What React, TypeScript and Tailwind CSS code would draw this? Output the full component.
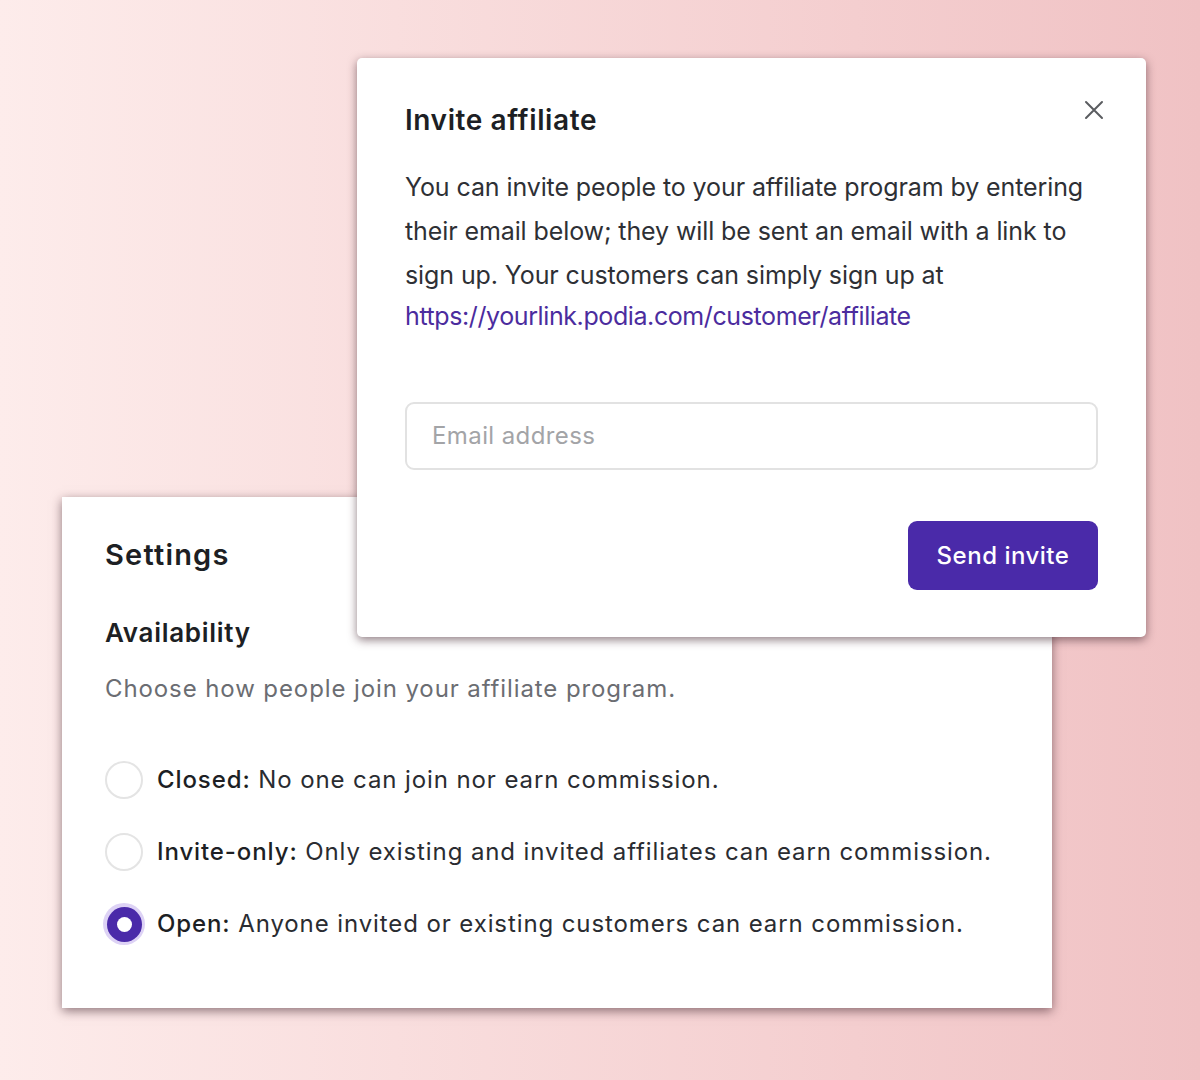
import React from "react";

function Radio({ checked }: { checked?: boolean }) {
  if (checked) {
    return (
      <span className="m-[-2px] flex h-[42px] w-[42px] shrink-0 items-center justify-center rounded-full bg-[#ddd2f5]">
        <span className="flex h-[35px] w-[35px] items-center justify-center rounded-full bg-[#4a2aa9]">
          <span className="h-[15px] w-[15px] rounded-full bg-white" />
        </span>
      </span>
    );
  }
  return <span className="h-[38px] w-[38px] shrink-0 rounded-full border-2 border-[#e4e4e4] bg-white" />;
}

export default function App() {
  const font = { fontFamily: "Inter, 'Noto Sans', sans-serif" };
  return (
    <div
      className="relative h-[1080px] w-full overflow-hidden bg-gradient-to-r from-[#fdeceb] to-[#f0c2c4]"
      style={font}
    >
      {/* Settings card */}
      <div className="absolute left-[62px] top-[497px] flex h-[511px] w-[990px] flex-col bg-white pl-[43px] shadow-[0_3px_10px_rgba(70,40,50,0.6)]">
        <h2 className="mt-[40px] text-[29px] font-semibold leading-[36px] tracking-[1.2px] text-[#1d1f24]">Settings</h2>
        <h3 className="mt-[44px] text-[26px] font-semibold leading-[32px] tracking-[0.7px] text-[#1d1f24]">
          Availability
        </h3>
        <p className="mt-[25px] text-[24px] leading-[30px] tracking-[0.9px] text-[#6b6d72]">
          Choose how people join your affiliate program.
        </p>
        <div className="mt-[57px] flex flex-col gap-[34px]">
          <label className="flex items-center gap-[14px] text-[24px] leading-[38px] tracking-[0.9px] text-[#2a2c31]">
            <Radio />
            <span>
              <span className="font-medium text-[#1d1f24]">Closed:</span> No one can join nor earn commission.
            </span>
          </label>
          <label className="flex items-center gap-[14px] text-[24px] leading-[38px] tracking-[0.9px] text-[#2a2c31]">
            <Radio />
            <span>
              <span className="font-medium text-[#1d1f24]">Invite-only:</span> Only existing and invited affiliates
              can earn commission.
            </span>
          </label>
          <label className="flex items-center gap-[14px] text-[24px] leading-[38px] tracking-[0.9px] text-[#2a2c31]">
            <Radio checked />
            <span>
              <span className="font-medium text-[#1d1f24]">Open:</span> Anyone invited or existing customers can earn
              commission.
            </span>
          </label>
        </div>
      </div>

      {/* Invite modal */}
      <div className="absolute left-[357px] top-[58px] flex h-[579px] w-[789px] flex-col rounded-[5px] bg-white px-[48px] shadow-[0_3px_10px_rgba(70,40,50,0.6)]">
        <div className="mt-[44px] flex items-start justify-between">
          <h2 className="text-[28px] font-semibold leading-[36px] tracking-[0.6px] text-[#1d1f24]">Invite affiliate</h2>
          <svg
            className="mr-[-6px] mt-[-2px]"
            width="20"
            height="20"
            viewBox="0 0 20 20"
            fill="none"
            stroke="#5a5c60"
            strokeWidth="2"
            strokeLinecap="round"
          >
            <path d="M2 2L18 18M18 2L2 18" />
          </svg>
        </div>
        <p className="mt-[27px] text-[25px] leading-[44px] tracking-[-0.1px] text-[#2e3035]">
          You can invite people to your affiliate program by entering their email below; they will be sent an email
          with a link to sign up. Your customers can simply sign up at
        </p>
        <a className="mt-[1px] text-[25px] leading-[36px] tracking-[-0.4px] text-[#4b2c9e]">
          https://yourlink.podia.com/customer/affiliate
        </a>
        <div className="mt-[68px] flex h-[68px] items-center rounded-[9px] border-2 border-[#e2e2e2] px-[25px]">
          <span className="text-[24px] tracking-[0.4px] text-[#a3a4a7]">Email address</span>
        </div>
        <div className="mt-[51px] flex justify-end">
          <button className="flex h-[69px] w-[190px] items-center justify-center rounded-[9px] bg-[#4a2aa9] text-[24px] font-medium tracking-[0.5px] text-white">
            Send invite
          </button>
        </div>
      </div>
    </div>
  );
}
